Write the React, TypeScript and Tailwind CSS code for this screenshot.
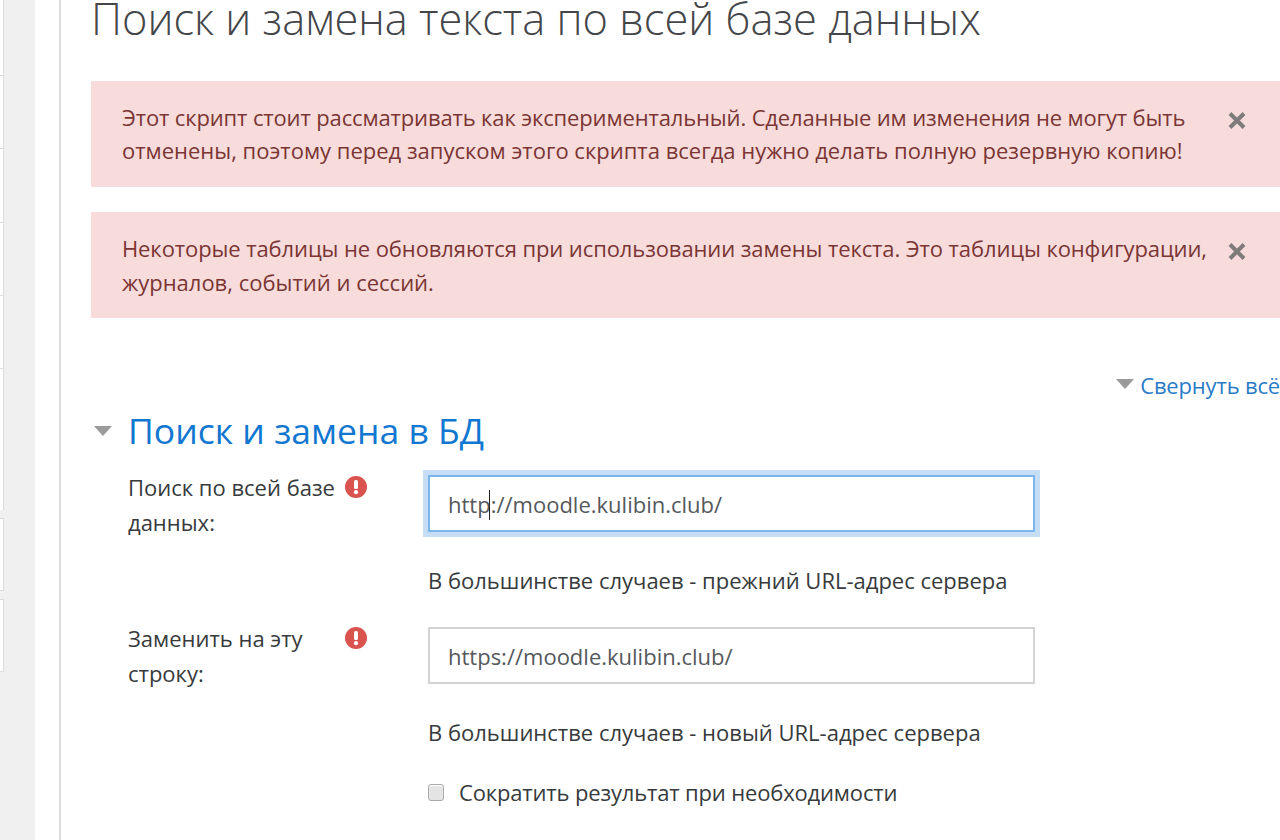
const font = { fontFamily: '"Open Sans", sans-serif' };

function Alert({ lines, gap, tight }: { lines: { text: string; cls?: string }[]; gap?: boolean; tight?: boolean }) {
  return (
    <div className={`relative h-[106px] w-[1189px] bg-[#f7dcdb] pl-[31px] text-[22px] text-[#7a3534] ${gap ? 'mt-[25px] pt-[19px] leading-[34px]' : 'pt-[20px] leading-[33px]'}`}>
      {lines.map((l) => (
        <div key={l.text} className={`whitespace-nowrap ${l.cls ?? ''}`}>{l.text}</div>
      ))}
      <svg className={`absolute left-[1137px] ${tight ? 'top-[31px]' : 'top-[31px]'}`} width="18" height="17" viewBox="0 0 18 17">
        <path d="M2 1.5 16 15.5M16 1.5 2 15.5" stroke="#7f7b7b" strokeWidth="4" />
      </svg>
    </div>
  );
}

function Caret({ className }: { className: string }) {
  return (
    <svg className={className} width="18" height="10" viewBox="0 0 18 10">
      <path d="M0 0H18L9 10Z" fill="#9b9b9b" />
    </svg>
  );
}

function Required() {
  return (
    <svg width="22" height="22" viewBox="0 0 22 22">
      <circle cx="11" cy="11" r="11" fill="#d9534f" />
      <rect x="9" y="4" width="4" height="9" rx="1.5" fill="#fff" />
      <circle cx="11" cy="16.2" r="2.1" fill="#fff" />
    </svg>
  );
}

function Field({ label1, label2, value, hint, focused, inputTop }: { label1: string; label2: string; value: React.ReactNode; hint: string; focused?: boolean; inputTop: string }) {
  return (
    <div className="flex text-[22px] leading-[35px] text-[#373a3c]">
      <div className="relative w-[300px] shrink-0 pt-[1px]">
        <div>{label1}</div>
        <div>{label2}</div>
        <div className="absolute left-[217px] top-[7px]"><Required /></div>
      </div>
      <div className={inputTop}>
        <div className={`flex h-[57px] w-[607px] items-center border-2 pl-[18px] pt-[1px] text-[#55595c] ${focused ? 'border-[#7cb5ec] shadow-[0_0_0_5px_#c5def5]' : 'border-[#d3d3d3]'}`}>
          {value}
        </div>
        <div className="mt-[31px] h-[35px] whitespace-nowrap">{hint}</div>
      </div>
    </div>
  );
}

export default function App() {
  return (
    <div className="flex h-[840px] w-[1280px] overflow-hidden bg-white" style={font}>
      <aside className="h-full w-[35px] shrink-0 bg-[#f0f0f0]">
        <div className="h-[510px] w-[4px] border-r border-[#dcdcdc] bg-white">
          <div className="h-[76px] border-b border-[#dcdcdc]" />
          <div className="h-[73px] border-b border-[#dcdcdc]" />
          <div className="h-[74px] border-b border-[#dcdcdc]" />
          <div className="h-[73px] border-b border-[#dcdcdc]" />
          <div className="h-[73px] border-b border-[#dcdcdc]" />
        </div>
        <div className="mt-[8px] h-[73px] w-[4px] border-y border-r border-[#dcdcdc] bg-white" />
        <div className="mt-[8px] h-[73px] w-[4px] border-y border-r border-[#dcdcdc] bg-white" />
      </aside>
      <div className="w-[24px] shrink-0" />
      <main className="min-w-0 flex-1 border-l-2 border-[#dedede] pl-[30px]">
        <h1 className="-mt-[11px] h-[92px] whitespace-nowrap text-[43.4px] font-light leading-[60px] text-[#444649]">Поиск и замена текста по всей базе данных</h1>
        <Alert
          lines={[
            { text: 'Этот скрипт стоит рассматривать как экспериментальный. Сделанные им изменения не могут быть', cls: 'tracking-[-0.14px]' },
            { text: 'отменены, поэтому перед запуском этого скрипта всегда нужно делать полную резервную копию!' },
          ]}
        />
        <Alert
          gap
          tight
          lines={[
            { text: 'Некоторые таблицы не обновляются при использовании замены текста. Это таблицы конфигурации,', cls: 'tracking-[-0.1px]' },
            { text: 'журналов, событий и сессий.' },
          ]}
        />
        <div className="mt-[50px] flex h-[34px] items-center justify-end whitespace-nowrap text-[22px] tracking-[-0.17px] text-[#2a7cc7]">
          <Caret className="mr-[6px] -mt-[2px]" />
          <span>Свернуть всё</span>
        </div>
        <div className="flex h-[60px] items-center whitespace-nowrap text-[35.5px] text-[#1177d1]">
          <Caret className="ml-[3px] mr-[16px] -mt-[2px]" />
          <span className="-mt-[2px]">Поиск и замена в БД</span>
        </div>
        <div className="pl-[37px] pt-[7px]">
          <Field
            focused
            inputTop="pt-[6px]"
            label1="Поиск по всей базе"
            label2="данных:"
            hint="В большинстве случаев - прежний URL-адрес сервера"
            value={<span className="relative">http<span className="absolute left-[41px] top-[3px] h-[30px] w-px bg-[#222]" />://moodle.kulibin.club/</span>}
          />
          <div className="mt-[22px]">
            <Field
              inputTop="pt-[7px]"
              label1="Заменить на эту"
              label2="строку:"
              hint="В большинстве случаев - новый URL-адрес сервера"
              value="https://moodle.kulibin.club/"
            />
          </div>
          <label className="mt-[25px] ml-[300px] flex h-[35px] items-center whitespace-nowrap text-[22px] tracking-[-0.16px] text-[#373a3c]">
            <span className="mr-[15px] h-[17px] w-[16px] rounded-[3px] border border-[#a9a9a9] bg-[#e4e4e4] shadow-[inset_0_1px_1px_#fff]" />
            Сократить результат при необходимости
          </label>
        </div>
      </main>
    </div>
  );
}
